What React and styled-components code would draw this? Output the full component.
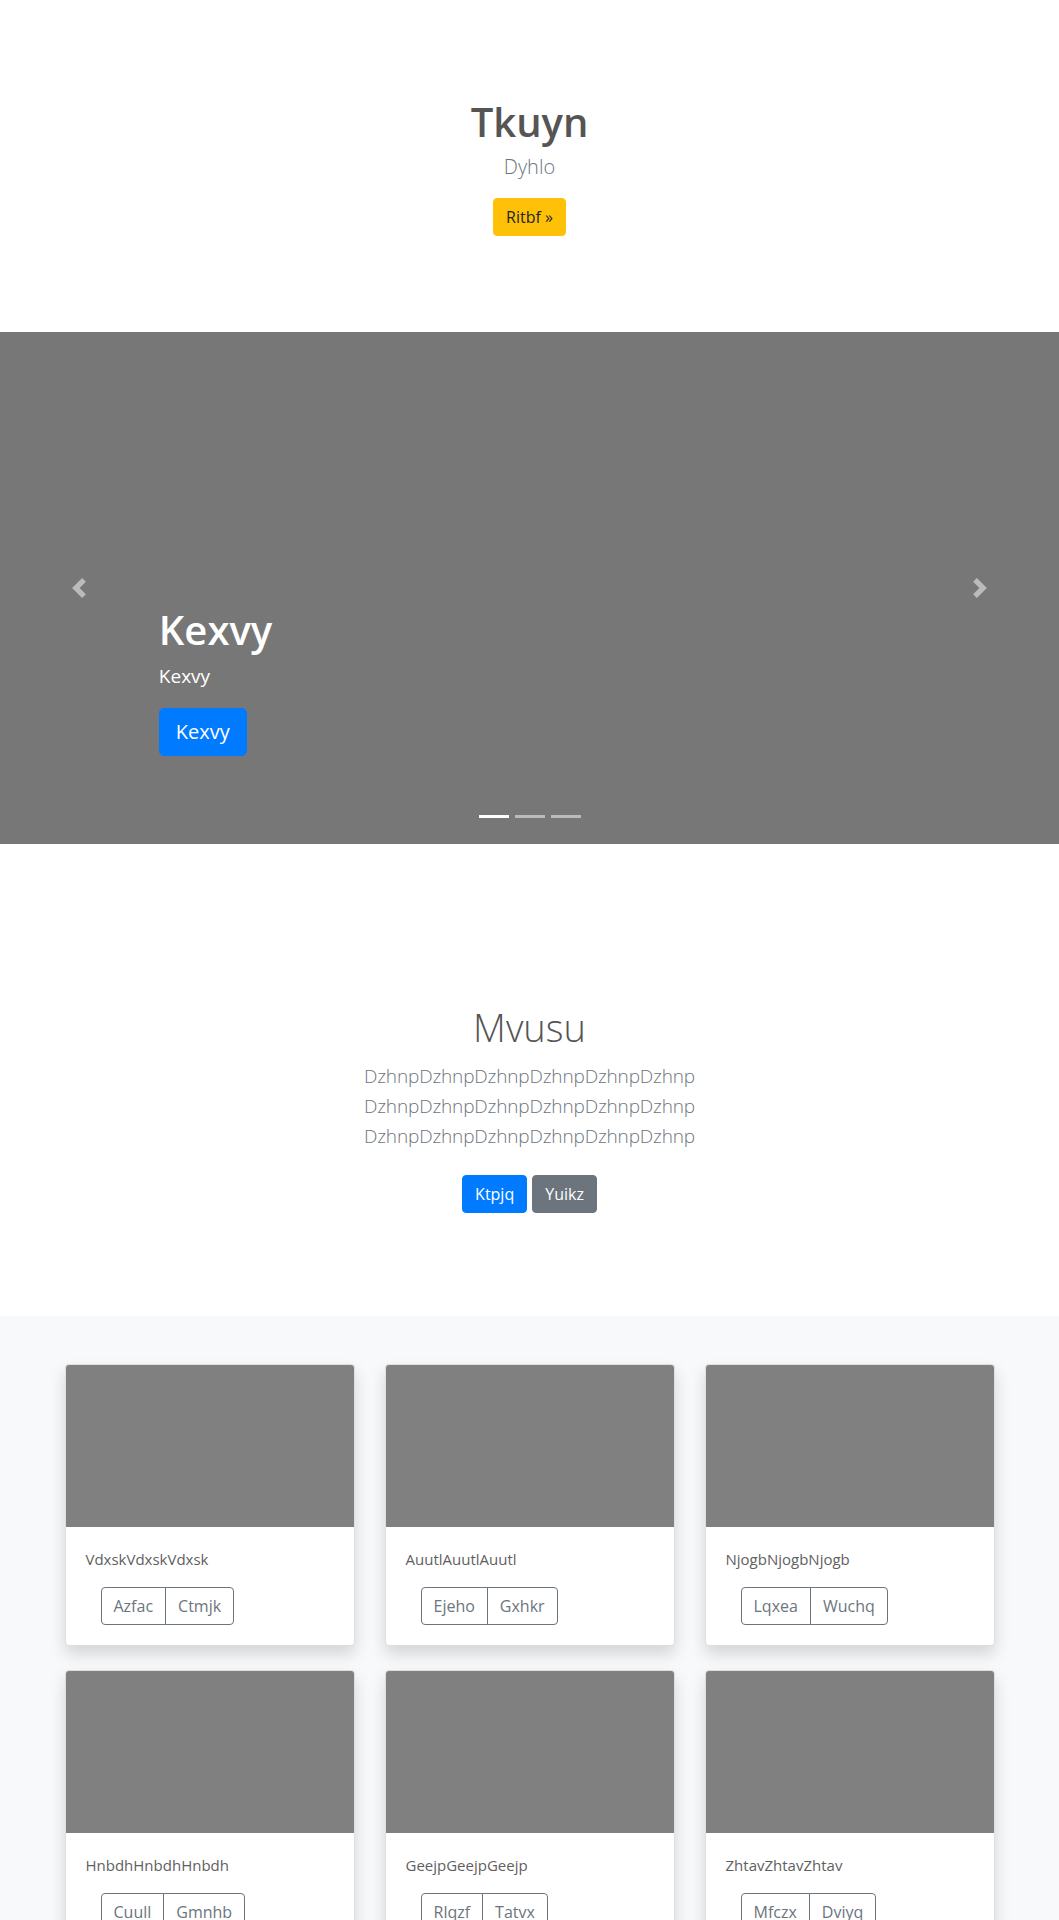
import React from "react";
import styled, { createGlobalStyle } from "styled-components";

const GlobalStyle = createGlobalStyle`
  * { box-sizing: border-box; }
  body {
    margin: 0;
    font-family: "Open Sans", "Noto Sans", Arial, sans-serif;
    font-size: 16px;
    line-height: 1.5;
    color: #212529;
    background: #fff;
  }
`;

const Hero = styled.section`
  text-align: center;
  padding: 98px 0 96px;
`;

const HeroTitle = styled.h1`
  margin: 0 0 6px;
  font-size: 40px;
  font-weight: 600;
  line-height: 1.2;
  color: #555;
`;

const Lead = styled.p`
  margin: 0 0 ${(p) => p.$mb || 16}px;
  font-size: 20px;
  font-weight: 300;
  line-height: 1.5;
  color: #6c757d;
`;

const Button = styled.button`
  display: inline-block;
  font-family: inherit;
  font-weight: 400;
  font-size: ${(p) => (p.$lg ? 20 : 16)}px;
  line-height: 1.5;
  padding: ${(p) => (p.$lg ? "8px 16px" : "6px 12px")};
  border-radius: ${(p) => (p.$lg ? 5 : 4)}px;
  border: 1px solid ${(p) => p.$bg};
  background: ${(p) => p.$bg};
  color: ${(p) => p.$fg};
  cursor: pointer;
`;

const Carousel = styled.section`
  position: relative;
  height: 512px;
  background: #777;
  display: flex;
  align-items: flex-end;
  padding: 0 15% 88px;
`;

const Caption = styled.div`
  color: #fff;
  text-align: left;
`;

const CaptionTitle = styled.h1`
  margin: 0 0 7px;
  font-size: 40px;
  font-weight: 600;
  line-height: 1.2;
`;

const CaptionText = styled.p`
  margin: 0 0 17px;
  font-size: 19px;
  line-height: 30px;
`;

const Control = styled.div`
  position: absolute;
  top: 0;
  bottom: 0;
  ${(p) => (p.$side === "left" ? "left: 0;" : "right: 0;")}
  width: 15%;
  display: flex;
  align-items: center;
  justify-content: center;
  opacity: 0.5;
`;

const Indicators = styled.ol`
  position: absolute;
  left: 0;
  right: 0;
  bottom: 0;
  margin: 0 0 16px;
  padding: 0;
  list-style: none;
  display: flex;
  justify-content: center;
`;

const Indicator = styled.li`
  width: 30px;
  height: 3px;
  margin: 10px 3px;
  background: #fff;
  opacity: ${(p) => (p.$active ? 1 : 0.5)};
`;

const Intro = styled.section`
  text-align: center;
  padding: 161px 0 95px;
`;

const IntroTitle = styled.h1`
  margin: 0 0 10px;
  font-size: 38px;
  font-weight: 300;
  line-height: 1.2;
  color: #555;
`;

const IntroLead = styled(Lead)`
  max-width: 456px;
  margin-left: auto;
  margin-right: auto;
  font-size: 19px;
  letter-spacing: -0.15px;
  line-height: 30px;
`;

const ButtonRow = styled.div`
  display: flex;
  justify-content: center;
  gap: 5px;
  margin: 0 0 8px;
`;

const Album = styled.section`
  background: #f8f9fa;
  padding: 48px 0;
`;

const Grid = styled.div`
  max-width: 930px;
  margin: 0 auto;
  display: grid;
  grid-template-columns: repeat(3, 1fr);
  column-gap: 30px;
  row-gap: 24px;
`;

const Card = styled.div`
  background: #fff;
  border: 1px solid rgba(0, 0, 0, 0.125);
  border-radius: 4px;
  overflow: hidden;
  box-shadow: 0 8px 16px rgba(0, 0, 0, 0.15);
`;

const CardImage = styled.div`
  height: 162px;
  background: #808080;
`;

const CardBody = styled.div`
  padding: 20px;
`;

const CardText = styled.p`
  margin: 0 0 16px;
  font-size: 15px;
  line-height: 24px;
  color: #5f5f5f;
`;

const BtnGroup = styled.div`
  display: inline-flex;
  margin-left: 15px;
`;

const OutlineBtn = styled.button`
  font-family: inherit;
  font-size: 16px;
  line-height: 1.5;
  padding: 6px 12px;
  background: transparent;
  color: #6c757d;
  border: 1px solid #6c757d;
  border-radius: 0;
  & + & {
    margin-left: -1px;
  }
  &:first-child {
    border-radius: 4px 0 0 4px;
  }
  &:last-child {
    border-radius: 0 4px 4px 0;
  }
`;

const ChevronIcon = ({ dir }) => (
  <svg width="20" height="20" viewBox="0 0 8 8" fill="#fff">
    {dir === "left" ? (
      <path d="M5.25 0l-4 4 4 4 1.5-1.5L4.25 4l2.5-2.5L5.25 0z" />
    ) : (
      <path d="M2.75 0l-1.5 1.5L3.75 4l-2.5 2.5L2.75 8l4-4-4-4z" />
    )}
  </svg>
);

const cards = [
  { text: "VdxskVdxskVdxsk", a: "Azfac", b: "Ctmjk" },
  { text: "AuutlAuutlAuutl", a: "Ejeho", b: "Gxhkr" },
  { text: "NjogbNjogbNjogb", a: "Lqxea", b: "Wuchq" },
  { text: "HnbdhHnbdhHnbdh", a: "Cuull", b: "Gmnhb" },
  { text: "GeejpGeejpGeejp", a: "Rlqzf", b: "Tatvx" },
  { text: "ZhtavZhtavZhtav", a: "Mfczx", b: "Dviyq" },
];

export default function App() {
  const word = "DzhnpDzhnpDzhnpDzhnpDzhnpDzhnp";
  return (
    <>
      <GlobalStyle />
      <Hero>
        <HeroTitle>Tkuyn</HeroTitle>
        <Lead>Dyhlo</Lead>
        <Button $bg="#ffc107" $fg="#212529">Ritbf »</Button>
      </Hero>

      <Carousel>
        <Indicators>
          <Indicator $active />
          <Indicator />
          <Indicator />
        </Indicators>
        <Caption>
          <CaptionTitle>Kexvy</CaptionTitle>
          <CaptionText>Kexvy</CaptionText>
          <Button $lg $bg="#007bff" $fg="#fff">Kexvy</Button>
        </Caption>
        <Control $side="left">
          <ChevronIcon dir="left" />
        </Control>
        <Control $side="right">
          <ChevronIcon dir="right" />
        </Control>
      </Carousel>

      <Intro>
        <IntroTitle>Mvusu</IntroTitle>
        <IntroLead $mb={24}>
          {word} {word} {word}
        </IntroLead>
        <ButtonRow>
          <Button $bg="#007bff" $fg="#fff">Ktpjq</Button>
          <Button $bg="#6c757d" $fg="#fff">Yuikz</Button>
        </ButtonRow>
      </Intro>

      <Album>
        <Grid>
          {cards.map((c) => (
            <Card key={c.text}>
              <CardImage />
              <CardBody>
                <CardText>{c.text}</CardText>
                <BtnGroup>
                  <OutlineBtn>{c.a}</OutlineBtn>
                  <OutlineBtn>{c.b}</OutlineBtn>
                </BtnGroup>
              </CardBody>
            </Card>
          ))}
        </Grid>
      </Album>
    </>
  );
}
